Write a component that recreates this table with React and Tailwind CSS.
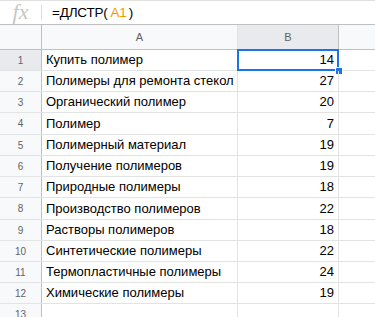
import React from "react";

const rows = [
  ["Купить полимер", 14],
  ["Полимеры для ремонта стекол", 27],
  ["Органический полимер", 20],
  ["Полимер", 7],
  ["Полимерный материал", 19],
  ["Получение полимеров", 19],
  ["Природные полимеры", 18],
  ["Производство полимеров", 22],
  ["Растворы полимеров", 18],
  ["Синтетические полимеры", 22],
  ["Термопластичные полимеры", 24],
  ["Химические полимеры", 19],
  ["", ""],
];

export default function App() {
  return (
    <div className="w-[375px] h-[317px] overflow-hidden bg-white text-black" style={{ fontFamily: '"Liberation Sans", Arial, sans-serif' }}>
      {/* Formula bar */}
      <div className="h-[25px] border-t border-b border-[#e0e0e0] border-b-[#c0c0c0] flex items-center">
        <div className="w-[41px] flex items-center justify-center">
          <span className="text-[22px] italic leading-none text-[#c4c7c5] -mt-[1px]" style={{ fontFamily: '"Liberation Serif", "Times New Roman", serif' }}>fx</span>
        </div>
        <div className="w-px h-[15px] bg-[#dadce0]"></div>
        <div className="pl-[10px] text-[13.5px] leading-none tracking-[-0.2px]">
          =ДЛСТР(<span className="text-[#f29900] ml-[3px] mr-[2px]">A1</span>)
        </div>
      </div>
      {/* Header row */}
      <div className="flex h-[25px] border-b border-[#c0c0c0] bg-[#f8f9fa] text-[11px] text-[#5f6368]">
        <div className="w-[42px] shrink-0 border-r border-[#c0c0c0]"></div>
        <div className="w-[196px] shrink-0 border-r border-[#e2e3e3] flex items-center justify-center">A</div>
        <div className="w-[101px] shrink-0 border-r border-[#c0c0c0] bg-[#e8eaed] flex items-center justify-center">B</div>
        <div className="flex-1"></div>
      </div>
      {rows.map((r, i) => (
        <div key={i} className={`flex border-b border-[#e2e3e3] ${i === 3 || i === 7 ? "h-[22px]" : "h-[21px]"}`}>
          <div className={`w-[42px] shrink-0 border-r border-[#c0c0c0] flex items-center justify-center text-[10px] text-[#5f6368] ${i === 0 ? "bg-[#e8eaed]" : "bg-[#f8f9fa]"}`}>
            {i + 1}
          </div>
          <div className="w-[196px] shrink-0 border-r border-[#e2e3e3] flex items-center pl-[4px] text-[13px] whitespace-nowrap overflow-hidden">
            {r[0]}
          </div>
          <div className="relative w-[101px] shrink-0 border-r border-[#e2e3e3] flex items-center justify-end pr-[4px] text-[13px]">
            {r[1]}
            {i === 0 && (
              <>
                <div className="absolute -left-[1px] -top-[1px] w-[102px] h-[22px] border-2 border-[#1a73e8]"></div>
                <div className="absolute -right-[5px] -bottom-[5px] w-[8px] h-[8px] bg-[#1a73e8] border border-white"></div>
              </>
            )}
          </div>
          <div className="flex-1"></div>
        </div>
      ))}
    </div>
  );
}
